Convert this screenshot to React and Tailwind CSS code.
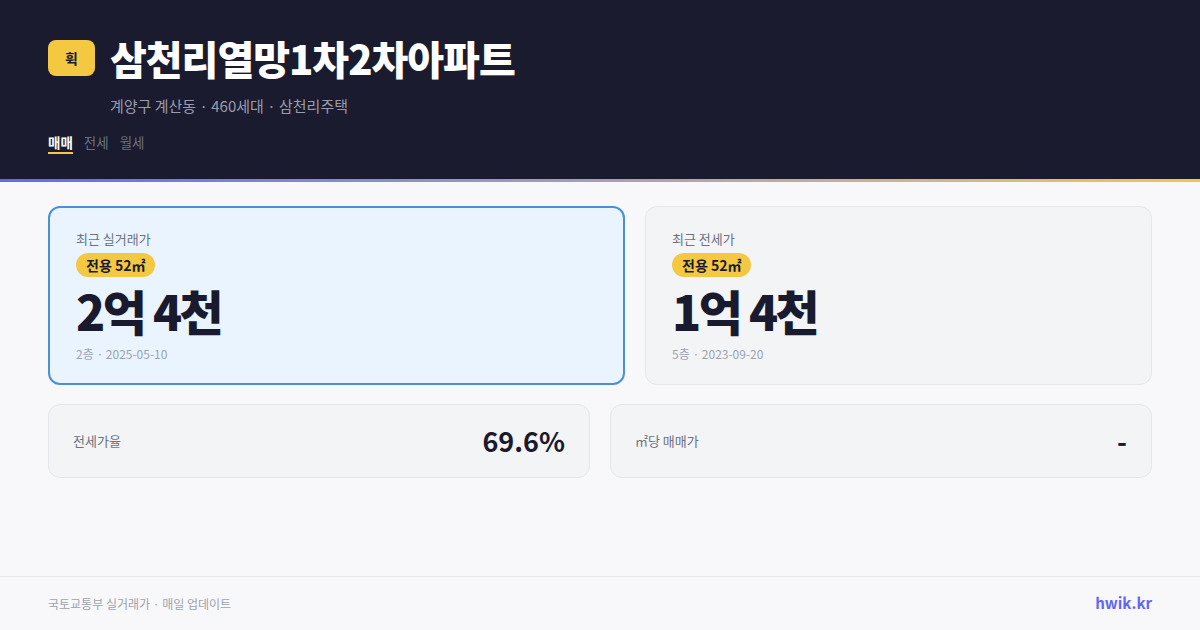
const font = { fontFamily: '"Noto Sans CJK KR", "Noto Sans", sans-serif' }

const Badge = () => (
  <span className="self-start rounded-full bg-[#f5c842] px-2.5 h-6 flex items-center text-[14px] font-bold text-[#1a1a2e]">
    전용 52㎡
  </span>
)

const PriceCard = ({ label, price, meta, active }) => (
  <div
    className={
      active
        ? "flex flex-col rounded-xl border-2 border-[#4a90d9] bg-[#eaf4ff] px-[26px] pt-[22px] pb-[20px]"
        : "flex flex-col rounded-xl border border-[#e5e7eb] bg-[#f3f4f6] px-[26px] pt-[23px] pb-[21px]"
    }
  >
    <div className="text-[13px] leading-[18px] text-[#6b7280]">{label}</div>
    <div className="mt-[5px] flex">
      <Badge />
    </div>
    <div className="mt-[4px] text-[48px] leading-[58px] font-extrabold tracking-[-2.5px] text-[#1a1a2e]">{price}</div>
    <div className="mt-[6px] text-[12px] leading-[18px] text-[#9ca3af]">{meta}</div>
  </div>
)

const StatCard = ({ label, value }) => (
  <div className="flex h-[74px] items-center justify-between rounded-xl border border-[#e5e7eb] bg-[#f3f4f6] pl-6 pr-6">
    <span className="text-[13px] text-[#6b7280]">{label}</span>
    <span className="text-[27px] font-bold text-[#1a1a2e]">{value}</span>
  </div>
)

const App = () => {
  return (
    <div style={font} className="flex h-[630px] w-[1200px] flex-col bg-[#f8f8fa]">
      <header className="h-[179px] bg-[#1a1b2e] px-12 pt-[38px]">
        <div className="flex items-center gap-[15px]">
          <div className="flex h-[36px] w-[47px] items-center justify-center rounded-lg bg-[#f5c842] text-[14px] font-bold text-[#1a1a2e]">
            휙
          </div>
          <h1 className="text-[40px] leading-[40px] font-extrabold tracking-[-1px] text-white">삼천리열망1차2차아파트</h1>
        </div>
        <p className="ml-[62px] mt-[17px] text-[15px] leading-[22px] text-[#9a9cae]">
          계양구 계산동 · 460세대 · 삼천리주택
        </p>
        <nav className="mt-[15px] flex gap-[11px] text-[13.5px] leading-[20px]">
          <span className="border-b-2 border-[#f5c842] font-bold text-white">매매</span>
          <span className="text-[#6b7080]">전세</span>
          <span className="text-[#6b7080]">월세</span>
        </nav>
      </header>
      <div className="h-[3px] bg-gradient-to-r from-[#6366f1] to-[#f5c542]" />

      <main className="flex flex-1 flex-col gap-[19px] px-12 pt-6">
        <div className="grid grid-cols-[577fr_507fr] gap-5">
          <PriceCard label="최근 실거래가" price="2억 4천" meta="2층 · 2025-05-10" active />
          <PriceCard label="최근 전세가" price="1억 4천" meta="5층 · 2023-09-20" />
        </div>
        <div className="grid grid-cols-2 gap-5">
          <StatCard label="전세가율" value="69.6%" />
          <StatCard label="㎡당 매매가" value="-" />
        </div>
      </main>

      <footer className="flex h-[54px] items-center justify-between border-t border-[#e5e7eb] px-12">
        <span className="text-[12px] text-[#9ca3af]">국토교통부 실거래가 · 매일 업데이트</span>
        <span className="text-[15px] font-bold text-[#6366f1]">hwik.kr</span>
      </footer>
    </div>
  )
}

export default App
